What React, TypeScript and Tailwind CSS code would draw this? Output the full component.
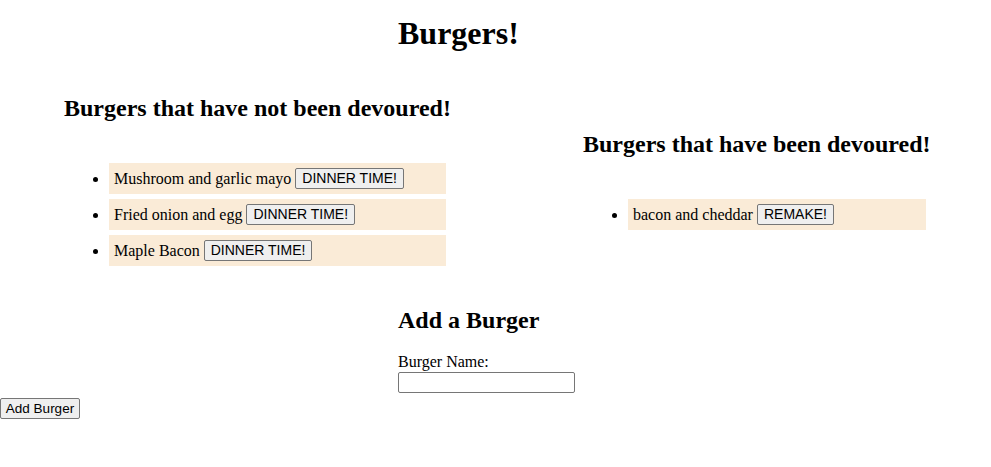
import React from "react";

const serif = "font-['Liberation_Serif','Times_New_Roman',serif]";
const btnBase =
  "inline-block align-top whitespace-nowrap h-[21px] border border-[#767676] bg-[#efefef] rounded-[2px] leading-[19px] text-black font-['Liberation_Sans',Arial,sans-serif]";
const btnCls = `${btnBase} px-[6px] text-[14px]`;

function Item({ name, action }: { name: string; action: string }) {
  return (
    <li className="bg-[#faebd7] p-[5px] text-[16px] leading-[21px] h-[31px] whitespace-nowrap">
      {name}{" "}
      <button type="button" className={btnCls}>
        {action}
      </button>
    </li>
  );
}

export default function App() {
  const uneaten = ["Mushroom and garlic mayo", "Fried onion and egg", "Maple Bacon"];
  const eaten = ["bacon and cheddar"];
  return (
    <div className={`${serif} text-black bg-white w-[991px] min-h-[467px]`}>
      <h1 className="pl-[398px] pt-[15px] text-[32px] leading-[37px] font-bold">Burgers!</h1>

      <div className="flex items-center mt-[42px] pl-[64px]">
        <div className="w-[387px]">
          <h2 className="text-[24px] leading-[28px] font-bold whitespace-nowrap">
            Burgers that have not been devoured!
          </h2>
          <ul className="list-disc list-outside mt-[41px] pl-[45px] pr-[5px] space-y-[5px]">
            {uneaten.map((b) => (
              <Item key={b} name={b} action="DINNER TIME!" />
            ))}
          </ul>
        </div>
        <div className="w-[348px] ml-[132px]">
          <h2 className="text-[24px] leading-[28px] font-bold whitespace-nowrap">
            Burgers that have been devoured!
          </h2>
          <ul className="list-disc list-outside mt-[41px] pl-[45px] pr-[5px] space-y-[5px]">
            {eaten.map((b) => (
              <Item key={b} name={b} action="REMAKE!" />
            ))}
          </ul>
        </div>
      </div>

      <form className="mt-[40px]" onSubmit={(e) => e.preventDefault()}>
        <div className="pl-[398px]">
          <h2 className="text-[24px] leading-[28px] font-bold">Add a Burger</h2>
          <label htmlFor="burger" className="block mt-[19px] text-[16px] leading-[18px]">
            Burger Name:
          </label>
          <input
            id="burger"
            type="text"
            className="block mt-[1px] w-[177px] h-[21px] border border-[#767676] rounded-[2px] bg-white px-[2px] text-[13.33px]"
          />
        </div>
        <div className="mt-[5px]">
          <button type="submit" className={`${btnBase} w-[80px] text-center text-[13.5px]`}>
            Add Burger
          </button>
        </div>
      </form>
    </div>
  );
}
